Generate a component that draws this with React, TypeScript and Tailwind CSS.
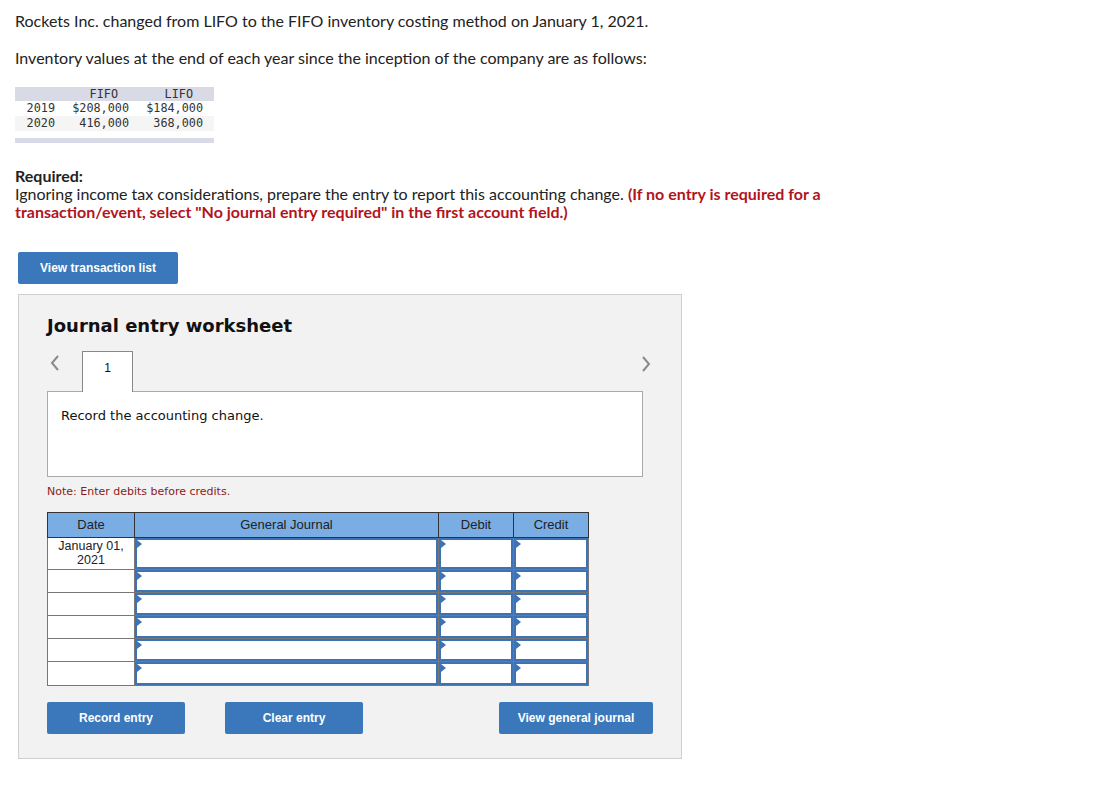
import React from 'react';

const rows = ['h-[31px]', 'h-[22px]', 'h-[22px]', 'h-[22px]', 'h-[22px]', 'h-[23px]'];

const Marker = () => (
    <span className="absolute left-0 top-0 w-0 h-0 border-t-[4px] border-b-[4px] border-l-[5px] border-t-transparent border-b-transparent border-l-[#3d72b5]" />
);

const InputCell: React.FC<{ h: string }> = ({ h }) => (
    <td className="p-0 border border-[#777] align-top">
        <div className={`relative ${h} w-full border-2 border-[#3d72b5] bg-white`}>
            <Marker />
        </div>
    </td>
);

const App: React.FC = () => (
    <div className="px-[15px] pt-[11px] pb-10 text-[#222] bg-white min-h-[799px]" style={{ fontFamily: 'Lato, "Open Sans", sans-serif' }}>
        <p className="text-[16px] leading-[20px]">Rockets Inc. changed from LIFO to the FIFO inventory costing method on January 1, 2021.</p>
        <p className="text-[16px] leading-[20px] mt-[17px]">Inventory values at the end of each year since the inception of the company are as follows:</p>

        <div className="mt-[19px] w-[199px] text-[11.8px] leading-[15px] text-[#333]" style={{ fontFamily: '"DejaVu Sans Mono", monospace' }}>
            <div className="grid grid-cols-[40px_74px_74px] bg-[#d8dae6] h-[14px] leading-[14px]">
                <span />
                <span className="text-right pr-[11px]">FIFO</span>
                <span className="text-right pr-[10px]">LIFO</span>
            </div>
            <div className="grid grid-cols-[40px_74px_74px] bg-white">
                <span className="text-right">2019</span>
                <span className="text-right">$208,000</span>
                <span className="text-right">$184,000</span>
            </div>
            <div className="grid grid-cols-[40px_74px_74px] bg-[#f5f5f5]">
                <span className="text-right">2020</span>
                <span className="text-right">416,000</span>
                <span className="text-right">368,000</span>
            </div>
            <div className="mt-[7px] h-[5px] bg-[#d8dae6]" />
        </div>

        <div className="mt-[24px] w-[835px] text-[16px] leading-[18px]">
            <p className="font-bold">Required:</p>
            <p>
                Ignoring income tax considerations, prepare the entry to report this accounting change.{' '}
                <span className="font-bold text-[#b1141d]">(If no entry is required for a transaction/event, select "No journal entry required" in the first account field.)</span>
            </p>
        </div>

        <button className="mt-[31px] ml-[3px] w-[160px] h-[32px] rounded-[2px] bg-[#3b78bb] text-white text-[12px] font-bold" style={{ fontFamily: '"Liberation Sans", Arial, sans-serif' }}>
            View transaction list
        </button>

        <div className="mt-[10px] ml-[3px] w-[664px] border border-[#cfcfcf] bg-[#f2f2f2] pl-[28px] pr-[26px] pt-[19px] pb-[24px]" style={{ fontFamily: '"DejaVu Sans", Verdana, sans-serif' }}>
            <h2 className="text-[18px] font-bold text-[#111] leading-[24px]">Journal entry worksheet</h2>

            <div className="w-[596px]">
                <div className="mt-[13px] flex items-end justify-between h-[40px]">
                    <div className="flex items-end h-full">
                        <span className="self-start mt-[4px] ml-[3px] w-[18px]">
                            <svg width="10" height="16" viewBox="0 0 10 16"><path d="M8 1 L2 8 L8 15" fill="none" stroke="#8a8a8a" strokeWidth="2" /></svg>
                        </span>
                        <div className="ml-[14px] w-[51px] h-[41px] -mb-px bg-white border border-b-0 border-[#888] flex justify-center pt-[7px] text-[12px] text-[#111] relative z-10" style={{ fontFamily: '"Liberation Sans", Arial, sans-serif' }}>
                            1
                        </div>
                    </div>
                    <span className="self-start mt-[5px] mr-[-8px]">
                        <svg width="10" height="16" viewBox="0 0 10 16"><path d="M2 1 L8 8 L2 15" fill="none" stroke="#8a8a8a" strokeWidth="2" /></svg>
                    </span>
                </div>

                <div className="h-[86px] bg-white border border-[#aaa] px-[13px] pt-[14px] text-[13px] text-[#111]">
                    Record the accounting change.
                </div>
            </div>

            <p className="mt-[8px] text-[11px] text-[#8b1b1b] leading-[14px]">Note: Enter debits before credits.</p>

            <table className="mt-[13px] border-collapse text-[13px] text-[#222]" style={{ fontFamily: '"Liberation Sans", Arial, sans-serif' }}>
                <thead>
                    <tr className="h-[25px] bg-[#79ade4]">
                        <th className="w-[87px] p-0 border border-[#333] font-normal">Date</th>
                        <th className="w-[304px] p-0 border border-[#333] font-normal">General Journal</th>
                        <th className="w-[75px] p-0 border border-[#333] font-normal">Debit</th>
                        <th className="w-[75px] p-0 border border-[#333] font-normal">Credit</th>
                    </tr>
                </thead>
                <tbody>
                    {rows.map((h, i) => (
                        <tr key={i}>
                            <td className="w-[87px] p-0 border border-[#777] bg-white text-center align-top leading-[14px] pt-[1px] text-[12.5px]">
                                {i === 0 ? (<>January 01,<br />2021</>) : null}
                            </td>
                            <InputCell h={h} />
                            <InputCell h={h} />
                            <InputCell h={h} />
                        </tr>
                    ))}
                </tbody>
            </table>

            <div className="mt-[16px] flex items-center text-white text-[12px] font-bold" style={{ fontFamily: '"Liberation Sans", Arial, sans-serif' }}>
                <button className="shrink-0 w-[138px] h-[32px] rounded-[2px] bg-[#3b78bb]">Record entry</button>
                <button className="shrink-0 ml-[40px] w-[138px] h-[32px] rounded-[2px] bg-[#3b78bb]">Clear entry</button>
                <button className="shrink-0 ml-[136px] w-[154px] h-[32px] rounded-[2px] bg-[#3b78bb]">View general journal</button>
            </div>
        </div>
    </div>
);

export default App;
